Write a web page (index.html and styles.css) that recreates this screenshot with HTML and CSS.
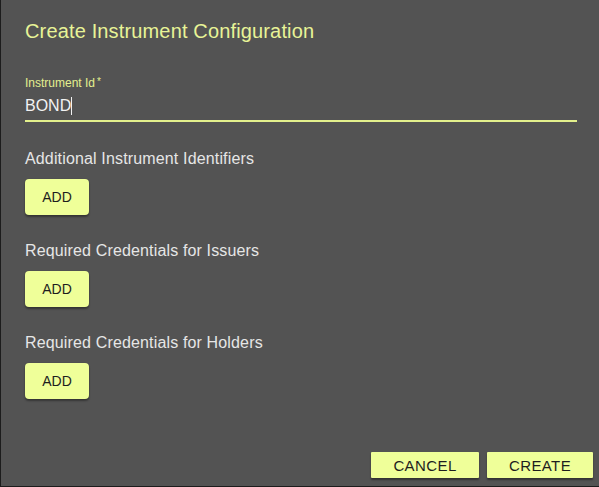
FILE: index.html
```html
<!DOCTYPE html>
<html>
<head>
<meta charset="utf-8">
<link rel="stylesheet" href="styles.css">
</head>
<body>
<div class="dialog">
  <h2 class="title">Create Instrument Configuration</h2>
  <div class="field">
    <label class="field-label">Instrument Id<span class="req">*</span></label>
    <div class="field-input">BOND<span class="caret"></span></div>
  </div>
  <div class="section">
    <div class="section-title">Additional Instrument Identifiers</div>
    <button class="btn-add">ADD</button>
  </div>
  <div class="section">
    <div class="section-title">Required Credentials for Issuers</div>
    <button class="btn-add">ADD</button>
  </div>
  <div class="section">
    <div class="section-title">Required Credentials for Holders</div>
    <button class="btn-add">ADD</button>
  </div>
  <div class="actions">
    <button class="btn-action btn-cancel">CANCEL</button>
    <button class="btn-action btn-create">CREATE</button>
  </div>
</div>
</body>
</html>
```
FILE: styles.css
```css
html, body {
  margin: 0;
  padding: 0;
  background: #535353;
}
body {
  width: 599px;
  height: 487px;
  overflow: hidden;
  font-family: "Liberation Sans", Arial, sans-serif;
}
.dialog {
  box-sizing: border-box;
  width: 599px;
  height: 487px;
  border-left: 1px solid #1c1c1c;
  border-bottom: 1px solid #1c1c1c;
  background: #535353;
  padding: 19px 22px 0 24px;
  display: flex;
  flex-direction: column;
}
.title {
  margin: 0;
  font-weight: normal;
  font-size: 20px;
  line-height: 24px;
  letter-spacing: 0.15px;
  color: #e8f497;
}
.field {
  margin-top: 31px;
  display: flex;
  flex-direction: column;
}
.field-label {
  font-size: 12px;
  line-height: 16px;
  color: #e3ef8f;
}
.req {
  margin-left: 2px;
  font-size: 10px;
  vertical-align: 2px;
}
.field-input {
  margin-top: 5px;
  font-size: 16px;
  line-height: 20px;
  color: #f2f2f2;
  padding-bottom: 4px;
  border-bottom: 2px solid #e3f08c;
  display: flex;
  align-items: center;
}
.caret {
  display: inline-block;
  width: 1px;
  height: 18px;
  background: #f2f2f2;
}
.section {
  display: flex;
  flex-direction: column;
  align-items: flex-start;
}
.field + .section {
  margin-top: 27px;
}
.section + .section {
  margin-top: 26px;
}
.section-title {
  font-size: 16px;
  line-height: 20px;
  letter-spacing: 0.15px;
  color: #e6e6e6;
}
.btn-add {
  margin-top: 10px;
  width: 64px;
  height: 36px;
  border: none;
  border-radius: 4px;
  background: #efff99;
  color: #1e1e1e;
  font-family: "Liberation Sans", Arial, sans-serif;
  font-size: 14px;
  padding: 0;
  box-shadow: 0 2px 2px rgba(0, 0, 0, 0.35), 0 0 1px rgba(0, 0, 0, 0.3);
}
.actions {
  margin-top: auto;
  margin-right: -16px;
  margin-bottom: 8px;
  display: flex;
  justify-content: flex-end;
  gap: 8px;
}
.btn-action {
  height: 26px;
  border: none;
  border-radius: 1px;
  background: #efff99;
  color: #1e1e1e;
  font-family: "Liberation Sans", Arial, sans-serif;
  font-size: 15px;
  letter-spacing: 0.4px;
  padding: 0;
  box-shadow: 0 2px 2px rgba(0, 0, 0, 0.4);
}
.btn-cancel { width: 108px; }
.btn-create { width: 106px; }
```
